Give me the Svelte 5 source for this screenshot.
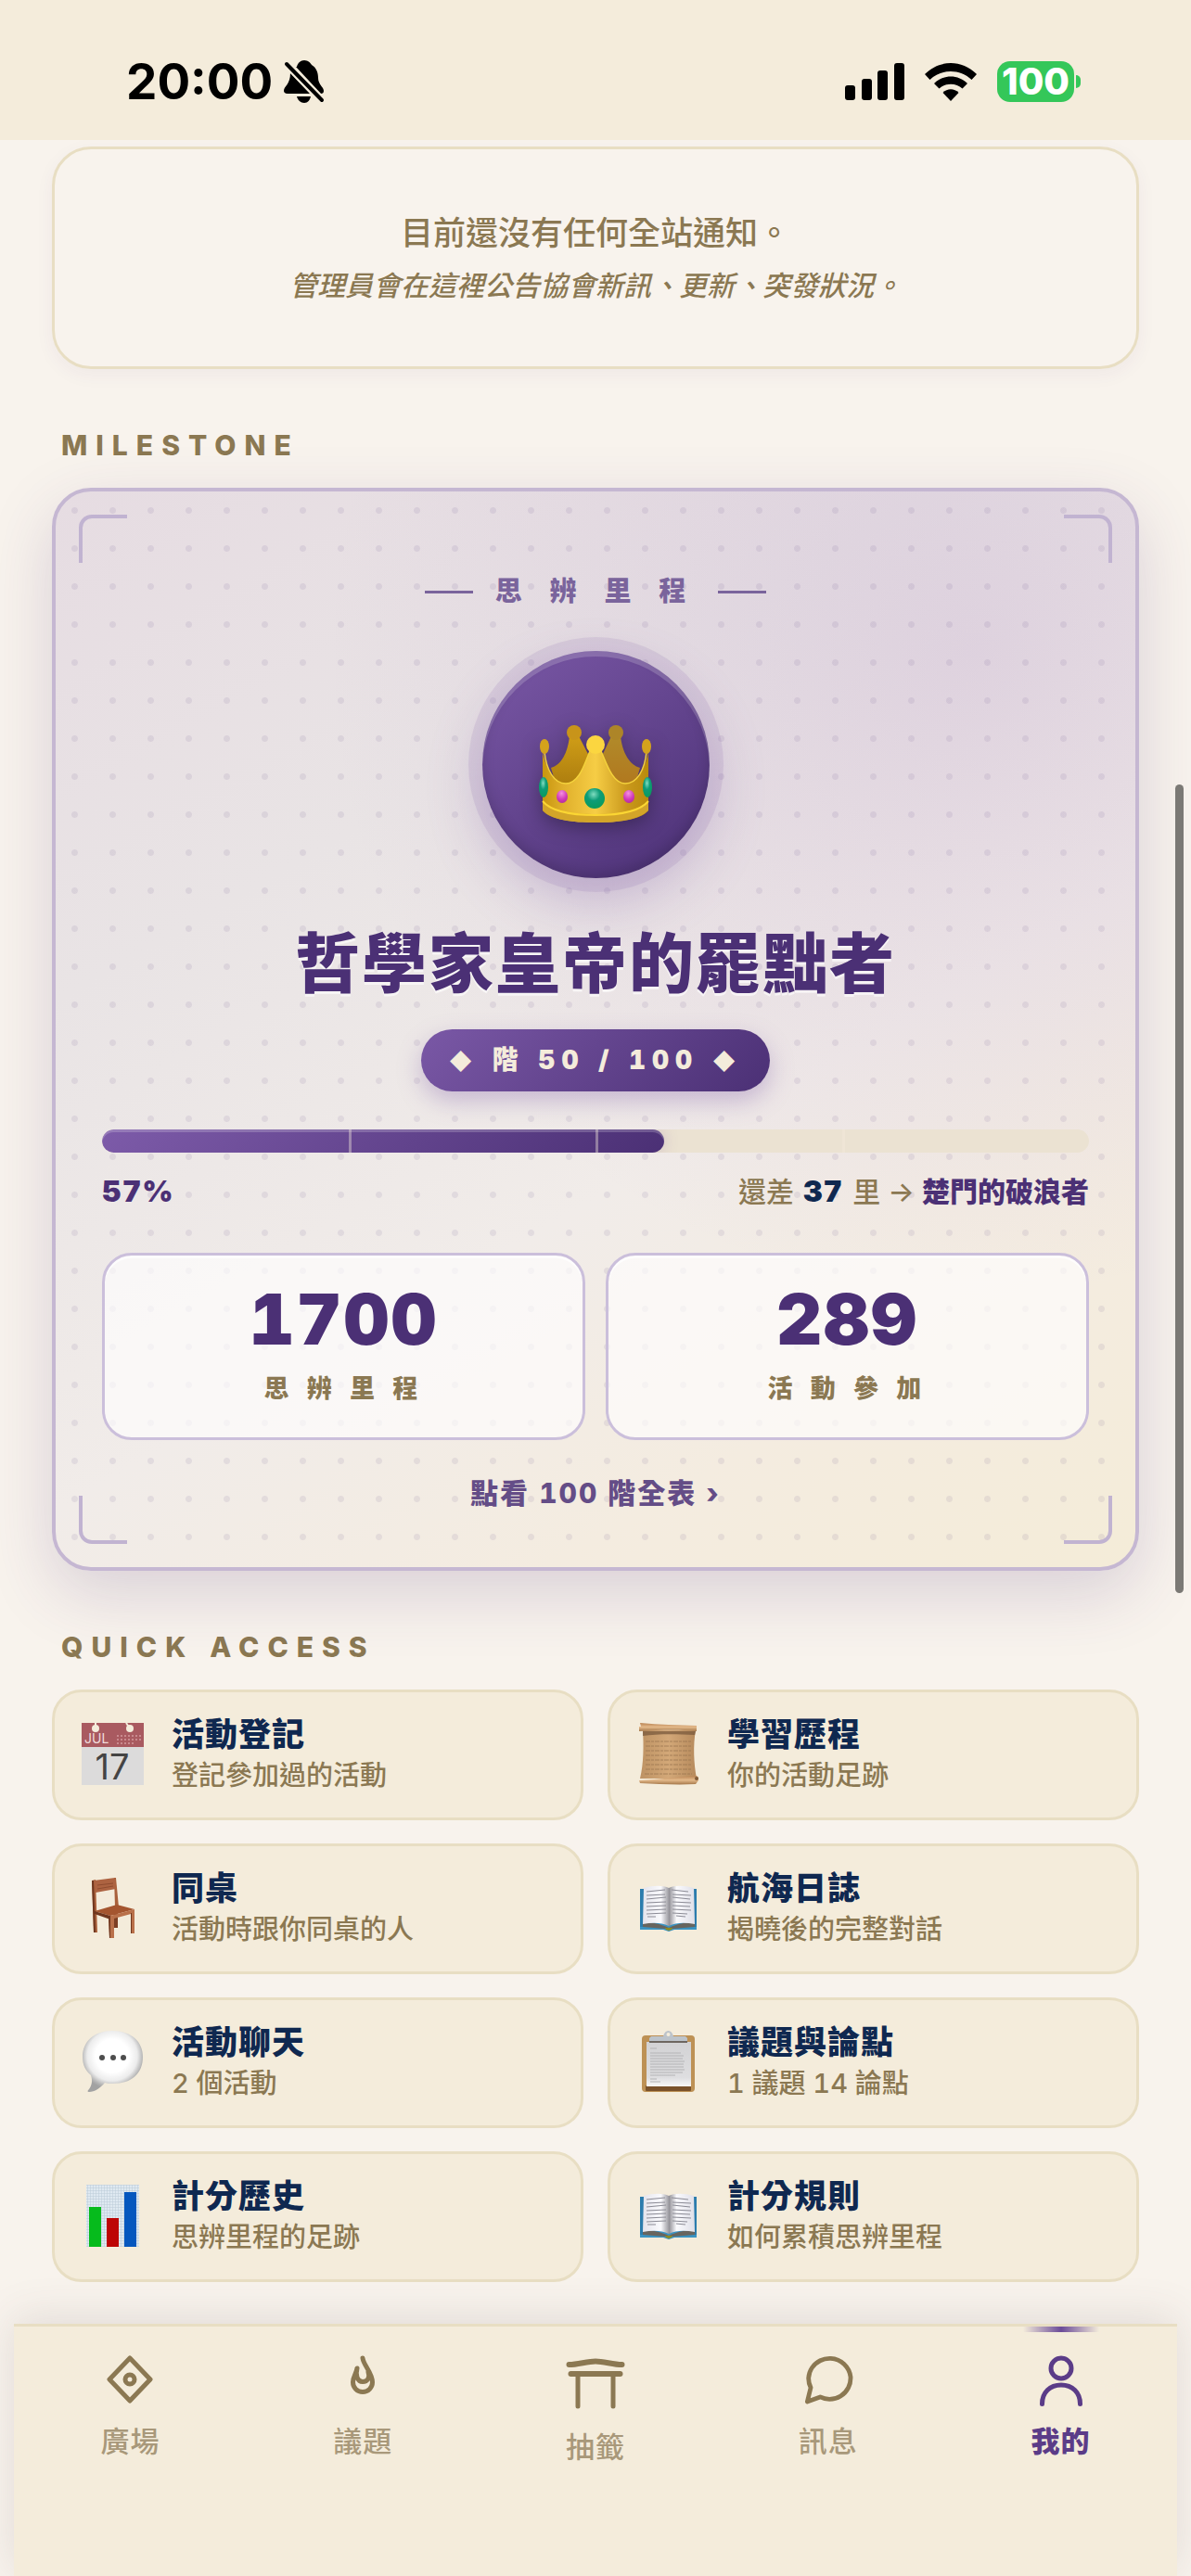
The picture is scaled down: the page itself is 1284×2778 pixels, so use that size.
<script lang="ts">
  type QuickLink = { icon: string; title: string; note: string };
  type Tab = { id: string; label: string };

  const currentMiles = 1700;
  const eventsJoined = 289;
  const milesLeft = 37;
  const progress = 57;

  const stats = [
    { value: currentMiles, label: '思 辨 里 程' },
    { value: eventsJoined, label: '活 動 參 加' }
  ];

  const quickLinks: QuickLink[] = [
    { icon: 'calendar', title: '活動登記', note: '登記參加過的活動' },
    { icon: 'scroll', title: '學習歷程', note: '你的活動足跡' },
    { icon: 'chair', title: '同桌', note: '活動時跟你同桌的人' },
    { icon: 'book', title: '航海日誌', note: '揭曉後的完整對話' },
    { icon: 'bubble', title: '活動聊天', note: '2 個活動' },
    { icon: 'clipboard', title: '議題與論點', note: '1 議題 14 論點' },
    { icon: 'chart', title: '計分歷史', note: '思辨里程的足跡' },
    { icon: 'book', title: '計分規則', note: '如何累積思辨里程' }
  ];

  const tabs: Tab[] = [
    { id: 'plaza', label: '廣場' },
    { id: 'topics', label: '議題' },
    { id: 'draw', label: '抽籤' },
    { id: 'messages', label: '訊息' },
    { id: 'me', label: '我的' }
  ];

  let activeTab = $state('me');
</script>

{#snippet crown()}
  <svg class="crown" viewBox="0 0 122 106" aria-hidden="true">
    <defs>
      <linearGradient id="crown-front" x1="0" y1="0" x2="1" y2="0">
        <stop offset="0" stop-color="#c8960f" />
        <stop offset="0.2" stop-color="#e0b02c" />
        <stop offset="0.5" stop-color="#f6cd45" />
        <stop offset="0.8" stop-color="#c9981c" />
        <stop offset="1" stop-color="#b98a0c" />
      </linearGradient>
      <linearGradient id="crown-back" x1="0" y1="0" x2="0" y2="1">
        <stop offset="0" stop-color="#cf9d17" />
        <stop offset="1" stop-color="#a97a0e" />
      </linearGradient>
      <linearGradient id="crown-back-right" x1="0" y1="0" x2="0" y2="1">
        <stop offset="0" stop-color="#b18a2a" />
        <stop offset="1" stop-color="#b1761d" />
      </linearGradient>
      <radialGradient id="gem-green" cx="0.45" cy="0.3" r="0.7">
        <stop offset="0" stop-color="#7fdcc0" />
        <stop offset="0.45" stop-color="#0d9c78" />
        <stop offset="1" stop-color="#0a9a5c" />
      </radialGradient>
      <radialGradient id="gem-pink" cx="0.45" cy="0.25" r="0.8">
        <stop offset="0" stop-color="#f58fe0" />
        <stop offset="0.6" stop-color="#d03ab9" />
        <stop offset="1" stop-color="#b02a9c" />
      </radialGradient>
    </defs>
    <path d="M33 12 C31 30 24 43 13 46 L20 70 H58 L54 33 L43 12Z" fill="url(#crown-back)" />
    <path d="M88 12 C90 30 98 43 109 46 L102 70 H64 L68 33 L78 12Z" fill="url(#crown-back-right)" />
    <circle cx="38" cy="8" r="8" fill="#c8941a" />
    <circle cx="83" cy="8" r="8" fill="#ad8528" />
    <path d="M4 29 C8 48 16 63 29 63 C44 63 50 39 55 28 H67 C72 39 79 63 93 63 C106 63 114 48 118 29 L118 92 C110 102 86 105 61 105 C36 105 12 102 4 92Z" fill="url(#crown-front)" />
    <path d="M6 29 C8 48 16 63 29 63 C44 63 50 39 55 28 M67 28 C72 39 79 63 93 63 C106 63 114 48 116 29" fill="none" stroke="#f4d23c" stroke-width="1.5" />
    <path d="M4 81 C14 93 38 96 61 96 S108 93 118 81 V92 C108 102 86 105 61 105 S14 102 4 92Z" fill="#d3a529" />
    <path d="M4 82 C14 94 38 97 61 97 S108 94 118 82" fill="none" stroke="#fbd633" stroke-width="2" />
    <ellipse cx="6" cy="23" rx="5" ry="8" fill="#d4a31c" />
    <ellipse cx="116" cy="23" rx="5" ry="8" fill="#d4a31c" />
    <circle cx="61" cy="21" r="10" fill="#fbd640" />
    <ellipse cx="5" cy="67" rx="5" ry="11" fill="url(#gem-green)" />
    <ellipse cx="117" cy="67" rx="5" ry="11" fill="url(#gem-green)" />
    <ellipse cx="25" cy="77" rx="6" ry="7" fill="url(#gem-pink)" />
    <ellipse cx="97" cy="77" rx="6" ry="7" fill="url(#gem-pink)" />
    <circle cx="60" cy="79" r="11" fill="url(#gem-green)" />
  </svg>
{/snippet}

{#snippet quickIcon(name: string)}
  <svg class="quick-icon" viewBox="0 0 67 67" aria-hidden="true">
    {#if name === 'calendar'}
      <rect width="67" height="67" fill="#dcdbdb" />
      <rect width="67" height="26" fill="#a95a60" />
      <circle cx="15" cy="6" r="4" fill="#f4ecdb" />
      <circle cx="52" cy="6" r="4" fill="#f4ecdb" />
      <path d="M15 0V6M48 0L52 6" stroke="#f4ecdb" stroke-width="2" />
      <text class="cal-month" x="3" y="22">JUL</text>
      <path d="M38 14H65M38 18H65M38 22H58" stroke="#c98a8e" stroke-width="2" stroke-dasharray="2 2" />
      <text class="cal-day" x="33" y="61" text-anchor="middle">17</text>
    {:else if name === 'scroll'}
      <defs>
        <linearGradient id="scroll-paper" x1="0" y1="0" x2="1" y2="0">
          <stop offset="0" stop-color="#bd9263" />
          <stop offset="0.5" stop-color="#d3a878" />
          <stop offset="1" stop-color="#b68a5c" />
        </linearGradient>
        <linearGradient id="scroll-roll" x1="0" y1="0" x2="0" y2="1">
          <stop offset="0" stop-color="#b98352" />
          <stop offset="0.5" stop-color="#e3b98a" />
          <stop offset="1" stop-color="#a5784b" />
        </linearGradient>
      </defs>
      <path d="M6 8 H63 C60 24 61 44 64 60 H3 C7 44 7 24 6 8Z" fill="url(#scroll-paper)" />
      <path d="M6 9 H63 L62 13 C40 12 20 12 6 14Z" fill="#7a5a3c" opacity="0.75" />
      <path d="M9 20H58M9 25H59M9 30H58M9 35H59M9 40H58M9 45H59M9 50H58M8 55H59" stroke="#94714c" stroke-width="1" stroke-dasharray="5 1 3 1" opacity="0.7" />
      <path d="M3 0 C24 2 44 2 64 3 V9 C44 7 22 8 2 9 L2 4 L4 4Z" fill="url(#scroll-roll)" />
      <path d="M2 62 C24 61 46 58 64 57 L66 59 V62 L63 66 C44 67 22 66 3 65Z" fill="url(#scroll-roll)" />
      <circle cx="64" cy="60" r="2" fill="#805c3a" />
    {:else if name === 'chair'}
      <path d="M35 38H39V55H35Z" fill="#7c3f24" />
      <path d="M11 4L15 3L17 60H13Z" fill="#a9603b" />
      <path d="M11 4L13 4L15 60H13Z" fill="#6f371f" />
      <path d="M35 1H37L40 33H36Z" fill="#a9603b" />
      <path d="M13 4L36 1L37 13L15 17Z" fill="#ad6341" />
      <path d="M17 9L34 7M17 13L34 10" stroke="#8f4c2f" stroke-width="1" />
      <path d="M14 37L38 30L57 35L31 42Z" fill="#a4552f" />
      <path d="M14 37L31 42V46L14 40Z" fill="#6f371f" />
      <path d="M31 42L57 35V39L31 46Z" fill="#b9704a" />
      <path d="M29 43H35V66H30Z" fill="#b9704a" />
      <path d="M29 43H31V66H30Z" fill="#6f371f" />
      <path d="M53 37H57V61H53Z" fill="#b9704a" />
      <path d="M53 39H54V61H53Z" fill="#6f371f" />
    {:else if name === 'book'}
      <defs>
        <linearGradient id="page-left" x1="0" y1="0" x2="1" y2="0">
          <stop offset="0" stop-color="#e4e4ec" />
          <stop offset="0.7" stop-color="#fafafd" />
          <stop offset="1" stop-color="#9d9ca2" />
        </linearGradient>
        <linearGradient id="page-right" x1="0" y1="0" x2="1" y2="0">
          <stop offset="0" stop-color="#8e8d93" />
          <stop offset="0.3" stop-color="#fafafd" />
          <stop offset="1" stop-color="#dfdfe8" />
        </linearGradient>
      </defs>
      <path d="M3 13H64V57H40L34 59L28 57H3Z" fill="#3a93c2" />
      <path d="M3 13H7V54H3ZM60 13H64V54H60Z" fill="#2b7cad" />
      <path d="M6 49C16 49 26 51 34 55C42 51 52 49 62 49V54L38 56H30L6 54Z" fill="#67655f" />
      <path d="M7 12C18 9 28 9 34 12V53C26 49 16 49 6 51Z" fill="url(#page-left)" />
      <path d="M34 12C40 9 50 9 61 12L62 51C52 49 42 49 34 53Z" fill="url(#page-right)" />
      <path d="M10 16L30 14M10 20L30 19M10 24L31 22M10 28L31 27M10 32L31 31M10 36L31 35M10 40L31 39M11 43L20 43M37 14L55 16M38 19L58 20M38 22L57 24M38 27L58 28M38 31L57 32M38 35L58 36M38 39L54 40M42 42L52 43" stroke="#8c8c96" stroke-width="1.2" />
      <path d="M30 55H38L37 57L34 58L31 57Z" fill="#8c8a22" />
    {:else if name === 'bubble'}
      <defs>
        <radialGradient id="bubble-fill" gradientUnits="userSpaceOnUse" cx="33" cy="27" r="36">
          <stop offset="0.5" stop-color="#ffffff" />
          <stop offset="0.75" stop-color="#ececec" />
          <stop offset="0.92" stop-color="#b4b4b4" />
          <stop offset="1" stop-color="#a2a2a2" />
        </radialGradient>
      </defs>
      <path d="M33 0C54 0 66 12 66 28C66 46 54 57 34 57C30 57 27 57 25 56C20 62 14 66 8 66C6 66 6 65 8 63C11 59 12 54 10 48C4 43 1 37 1 28C1 12 13 0 33 0Z" fill="url(#bubble-fill)" />
      <circle cx="22" cy="29" r="3" fill="#4d4d4d" />
      <circle cx="34" cy="29" r="3" fill="#4d4d4d" />
      <circle cx="45" cy="29" r="3" fill="#4d4d4d" />
    {:else if name === 'clipboard'}
      <defs>
        <linearGradient id="sheet" x1="0" y1="0" x2="0" y2="1">
          <stop offset="0" stop-color="#d2d2d4" />
          <stop offset="0.8" stop-color="#dedee0" />
          <stop offset="1" stop-color="#f8f8f8" />
        </linearGradient>
      </defs>
      <rect x="5" y="5" width="57" height="61" rx="4" fill="#bd9155" />
      <rect x="9" y="59" width="49" height="6" rx="1" fill="#7a522b" />
      <rect x="10" y="12" width="48" height="48" fill="url(#sheet)" />
      <path d="M14 19H21M14 24H47M14 27H50M14 30H49M14 33H51M14 36H50M14 39H50M14 42H51M14 45H49M14 48H41M14 52H21M14 55H25" stroke="#b4b4b6" stroke-width="1.2" />
      <path d="M28 6C29 2 31 0 33.5 0S38 2 39 6H52L54 8V13H13V8L15 6Z" fill="#bcc3ca" />
      <circle cx="33.5" cy="4" r="2" fill="#f4ecdb" />
      <path d="M13 12H54" stroke="#6d6660" stroke-width="2" />
    {:else if name === 'chart'}
      <defs>
        <pattern id="graph-paper" width="3" height="3" patternUnits="userSpaceOnUse">
          <rect width="3" height="3" fill="#dfe9f1" />
          <path d="M0 0H3M0 0V3" stroke="#bccbd8" stroke-width="1" />
        </pattern>
      </defs>
      <rect x="5" width="57" height="67" fill="url(#graph-paper)" />
      <rect x="8" y="24" width="13" height="43" fill="#06bb1c" />
      <rect x="27" y="36" width="13" height="31" fill="#bd0505" />
      <rect x="46" y="8" width="13" height="59" fill="#0557be" />
    {/if}
  </svg>
{/snippet}

{#snippet tabIcon(id: string)}
  {#if id === 'plaza'}
    <svg class="tab-icon" viewBox="0 0 64 64" aria-hidden="true">
      <path d="M32 9L54 32L32 55L10 32Z" />
      <circle cx="32" cy="32" r="5" />
    </svg>
  {:else if id === 'topics'}
    <svg class="tab-icon" viewBox="0 0 64 64" aria-hidden="true">
      <path d="M32 9C33 17 42.5 25 42.5 35A10.5 10.5 0 0 1 21.5 35C21.5 29 25 26 26 20C24 27 26 34.5 32 34.5C37.5 34.5 40 30 38 24" />
    </svg>
  {:else if id === 'draw'}
    <svg class="tab-icon wide" viewBox="0 0 70 70" aria-hidden="true">
      <path d="M6.5 16C16 16 26 12.5 35 12.5S54 16 63.5 16" stroke-width="6" />
      <path d="M8.5 26H61.5" stroke-width="6" />
      <path d="M16 26V61M54 26V61" />
    </svg>
  {:else if id === 'messages'}
    <svg class="tab-icon" viewBox="0 0 24 24" aria-hidden="true">
      <path stroke-width="1.8" d="M21 11.5a8.38 8.38 0 0 1-.9 3.8 8.5 8.5 0 0 1-7.6 4.7 8.38 8.38 0 0 1-3.8-.9L3.5 21l1.4-5.7a8.38 8.38 0 0 1-.9-3.8 8.5 8.5 0 0 1 4.7-7.1 8.38 8.38 0 0 1 3.8-.9h.5a8.48 8.48 0 0 1 8 7.5v.5z" />
    </svg>
  {:else}
    <svg class="tab-icon" viewBox="0 0 64 64" aria-hidden="true">
      <circle cx="32" cy="20" r="11" />
      <path d="M11.5 58.5C11.5 46 20 38 32 38S52.5 46 52.5 58.5" />
    </svg>
  {/if}
{/snippet}

<div class="screen">
  <header class="status-bar">
    <div class="status-left">
      <time>20:00</time>
      <svg class="bell" viewBox="0 0 44 46" aria-label="靜音">
        <path d="M14 7C15 3 18 0 22 0S29 3 30 5C35 8 37 13 37 19C37 26 43 29 43 33C43 35 42 36 40 36L13 7Z" />
        <path d="M7 14L28 36H4C1 36 0 34 0 33C0 28 7 26 7 14Z" />
        <path d="M14 39H29C28 43 26 46 22 46S15 43 14 39Z" />
        <path d="M3 4L41 43" fill="none" stroke="#f4ecdb" stroke-width="8" />
        <path d="M3 4L41 43" fill="none" stroke="#000" stroke-width="4" stroke-linecap="round" />
      </svg>
    </div>
    <div class="status-right">
      <svg class="signal" viewBox="0 0 64 40" aria-label="訊號">
        <rect y="24" width="11" height="16" rx="3" />
        <rect x="18" y="17" width="11" height="23" rx="3" />
        <rect x="35" y="8" width="11" height="32" rx="3" />
        <rect x="53" width="11" height="40" rx="3" />
      </svg>
      <svg class="wifi" viewBox="0 0 56 41" aria-label="Wi-Fi">
        <path d="M0 12C16 -4 40 -4 56 12L50.5 18C38 6 18 6 5.5 18Z" />
        <path d="M10 22C20 12 36 12 46 22L40.5 27.5C34 21 22 21 15.5 27.5Z" />
        <path d="M19.5 32C24 27 32 27 36.5 32L28 41Z" />
      </svg>
      <div class="battery">
        <span class="battery-level">100</span>
        <span class="battery-cap"></span>
      </div>
    </div>
  </header>

  <main>
    <section class="notice">
      <p>目前還沒有任何全站通知。</p>
      <p class="notice-hint">管理員會在這裡公告協會新訊、更新、突發狀況。</p>
    </section>

    <h2 class="section-title">MILESTONE</h2>
    <section class="milestone">
      <i class="corner top left"></i>
      <i class="corner top right"></i>
      <i class="corner bottom left"></i>
      <i class="corner bottom right"></i>

      <div class="eyebrow">思 辨 里 程</div>
      <div class="medal">{@render crown()}</div>
      <h1>哲學家皇帝的罷黜者</h1>
      <div class="rank"><small>◆</small> 階 50 / 100 <small>◆</small></div>

      <div class="track" role="progressbar" aria-label="思辨里程" aria-valuenow={progress} aria-valuemin="0" aria-valuemax="100">
        <div class="fill" style="width: {progress}%"></div>
        <div class="ticks"><i></i><i></i><i></i><i></i></div>
      </div>
      <div class="progress-row">
        <strong class="percent">{progress}%</strong>
        <span>還差 <b>{milesLeft}</b> 里 → <strong>楚門的破浪者</strong></span>
      </div>

      <div class="stats">
        {#each stats as stat}
          <div class="stat">
            <span class="stat-value">{stat.value}</span>
            <span class="stat-label">{stat.label}</span>
          </div>
        {/each}
      </div>
      <a class="all-ranks" href="#ranks">點看 100 階全表 ›</a>
    </section>

    <h2 class="section-title">QUICK ACCESS</h2>
    <section class="quick-grid">
      {#each quickLinks as link}
        <a class="quick-card" href="#quick">
          {@render quickIcon(link.icon)}
          <span class="quick-text">
            <span class="quick-title">{link.title}</span>
            <span class="quick-note">{link.note}</span>
          </span>
        </a>
      {/each}
    </section>
  </main>

  <nav>
    {#each tabs as tab}
      <a href="#{tab.id}" class="tab" class:active={tab.id === activeTab} onclick={() => (activeTab = tab.id)}>
        {@render tabIcon(tab.id)}
        <span>{tab.label}</span>
      </a>
    {/each}
  </nav>

  <div class="scroll-thumb"></div>
</div>

<style>
  :global(body) {
    background: #f8f3ed;
  }

  .screen {
    --cream: #f4ecdb;
    --line: #e8dec3;
    --brown: #8b7852;
    --navy: #0f2850;
    --purple: #4b3075;
    --lilac: #c5b7d2;
    position: relative;
    display: flex;
    flex-direction: column;
    min-height: 100vh;
    overflow: hidden;
    color: var(--brown);
    font-family: Inter, "Noto Sans CJK TC", sans-serif;
  }

  a {
    color: inherit;
    text-decoration: none;
  }

  h1,
  h2,
  p {
    margin: 0;
  }

  /* Status bar */
  .status-bar {
    position: relative;
    z-index: 1;
    display: flex;
    justify-content: space-between;
    padding: 66px 119px 41px 136px;
    background: var(--cream);
    color: #000;
  }

  .status-left,
  .status-right {
    display: flex;
    align-items: center;
    height: 44px;
  }

  .status-left {
    gap: 12px;
  }

  .status-right {
    gap: 22px;
  }

  time {
    font-size: 53px;
    font-weight: 700;
    line-height: 46px;
  }

  .bell {
    width: 44px;
    height: 46px;
  }

  .signal {
    width: 64px;
    height: 40px;
  }

  .wifi {
    width: 56px;
    height: 41px;
  }

  .battery {
    display: flex;
    align-items: center;
    gap: 2px;
  }

  .battery-level {
    width: 83px;
    border-radius: 14px;
    background: #34c759;
    color: #fff;
    font-size: 40px;
    font-weight: 800;
    line-height: 44px;
    text-align: center;
  }

  .battery-cap {
    width: 5px;
    height: 14px;
    border-radius: 0 5px 5px 0;
    background: #34c759;
  }

  main {
    flex: 1;
    padding: 7px 56px 45px;
    font-variant-numeric: tabular-nums;
  }

  /* Notice */
  .notice {
    padding: 62px 40px 58px;
    border: 3px solid var(--line);
    border-radius: 42px;
    box-shadow: 0 6px 20px rgba(75, 48, 117, 0.05);
    text-align: center;
    font-size: 35px;
    font-weight: 500;
    line-height: 57px;
  }

  .notice-hint {
    font-size: 30px;
    font-style: italic;
  }

  .section-title {
    padding: 62px 10px 26px;
    font-size: 30px;
    font-weight: 800;
    line-height: 40px;
    letter-spacing: 9px;
  }

  /* Milestone */
  .milestone {
    position: relative;
    display: flex;
    flex-direction: column;
    align-items: center;
    padding: 88px 50px 60px;
    border: 4px solid var(--lilac);
    border-radius: 42px;
    background:
      radial-gradient(circle, rgba(75, 48, 117, 0.09) 3px, transparent 4px) 0 0 / 41px 41px,
      radial-gradient(circle at 85% 15%, rgba(150, 100, 180, 0.16), transparent 50%),
      linear-gradient(150deg, #e6dce2 0%, #e9e4e5 30%, #f1ece9 60%, #f4ece0 80%, #f4ecd8 100%);
    box-shadow: 0 24px 70px rgba(75, 48, 117, 0.18);
  }

  .corner {
    position: absolute;
    box-sizing: border-box;
    width: 52px;
    height: 52px;
    border: 0 solid #c1b3d1;
  }

  .corner.top {
    top: 25px;
    border-top-width: 4px;
  }

  .corner.bottom {
    bottom: 25px;
    border-bottom-width: 4px;
  }

  .corner.left {
    left: 25px;
    border-left-width: 4px;
  }

  .corner.right {
    right: 25px;
    border-right-width: 4px;
  }

  .corner.top.left { border-top-left-radius: 14px; }
  .corner.top.right { border-top-right-radius: 14px; }
  .corner.bottom.left { border-bottom-left-radius: 14px; }
  .corner.bottom.right { border-bottom-right-radius: 14px; }

  .eyebrow {
    display: flex;
    align-items: center;
    gap: 24px;
    color: #7a649c;
    font-size: 29px;
    font-weight: 800;
    line-height: 40px;
    letter-spacing: 11px;
  }

  .eyebrow::before,
  .eyebrow::after {
    content: '';
    width: 52px;
    height: 3px;
    background: currentColor;
  }

  .medal {
    display: grid;
    place-items: center;
    box-sizing: border-box;
    width: 245px;
    height: 245px;
    margin-top: 44px;
    padding-top: 20px;
    border-radius: 50%;
    background: linear-gradient(145deg, #7a58a6, #4b3075);
    box-shadow:
      0 0 0 15px rgba(122, 88, 166, 0.13),
      0 24px 60px rgba(122, 88, 166, 0.32),
      inset 0 6px 0 rgba(255, 255, 255, 0.18),
      inset 0 -6px 14px rgba(0, 0, 0, 0.15);
  }

  .crown {
    width: 122px;
    height: 106px;
    filter: drop-shadow(0 6px 10px rgba(0, 0, 0, 0.3));
  }

  h1 {
    margin-top: 51px;
    color: var(--purple);
    font-size: 70px;
    font-weight: 900;
    line-height: 84px;
    letter-spacing: 2px;
    text-shadow: 0 3px 0 rgba(255, 255, 255, 0.6);
  }

  .rank {
    margin-top: 28px;
    padding: 0 30px;
    border-radius: 34px;
    background: linear-gradient(135deg, #7a58a6, #4b3075);
    box-shadow: 0 10px 26px rgba(122, 88, 166, 0.35);
    color: var(--cream);
    font-size: 28px;
    font-weight: 900;
    line-height: 67px;
    letter-spacing: 7px;
  }

  .rank small {
    font-size: 24px;
    line-height: 24px;
  }

  .track {
    position: relative;
    align-self: stretch;
    height: 25px;
    margin-top: 41px;
    overflow: hidden;
    border-radius: 13px;
    background: #ebe2d2;
  }

  .fill {
    height: 100%;
    border-radius: 13px;
    background: linear-gradient(135deg, #7d5ba9, #4b3075);
    box-shadow: inset 0 3px 0 rgba(255, 255, 255, 0.2), 0 0 16px rgba(122, 88, 166, 0.25);
  }

  .ticks {
    position: absolute;
    inset: 0;
    display: grid;
    grid-template-columns: repeat(4, 1fr);
  }

  .ticks i + i {
    border-left: 3px solid rgba(244, 236, 219, 0.4);
  }

  .progress-row {
    display: flex;
    align-self: stretch;
    justify-content: space-between;
    margin-top: 22px;
    font-size: 30px;
    font-weight: 500;
    line-height: 40px;
  }

  .progress-row strong {
    color: var(--purple);
    font-weight: 800;
  }

  .progress-row b {
    margin: 0 2px;
    color: var(--navy);
    font-size: 32px;
    font-weight: 900;
    letter-spacing: 1px;
  }

  .progress-row .percent {
    font-size: 32px;
    font-weight: 900;
    letter-spacing: 1px;
  }

  .stats {
    display: grid;
    grid-template-columns: 1fr 1fr;
    align-self: stretch;
    gap: 22px;
    margin-top: 46px;
  }

  .stat {
    display: flex;
    flex-direction: column;
    align-items: center;
    padding: 24px 20px 32px;
    border: 3px solid #cbbfdb;
    border-radius: 32px;
    background: rgba(255, 255, 255, 0.65);
    box-shadow: inset 0 3px 0 rgba(255, 255, 255, 0.7);
  }

  .stat-value {
    color: var(--purple);
    font-size: 76px;
    font-weight: 900;
    line-height: 88px;
    letter-spacing: 2px;
  }

  .stat-label {
    margin-top: 12px;
    font-size: 27px;
    font-weight: 800;
    line-height: 40px;
    letter-spacing: 6px;
  }

  .all-ranks {
    margin-top: 37px;
    color: #644d87;
    font-size: 30px;
    font-weight: 800;
    line-height: 40px;
    letter-spacing: 2px;
  }

  /* Quick access */
  .quick-grid {
    display: grid;
    grid-template-columns: 1fr 1fr;
    gap: 25px 26px;
  }

  .quick-card {
    display: flex;
    align-items: center;
    gap: 30px;
    box-sizing: border-box;
    min-height: 141px;
    padding: 20px 29px 22px;
    border: 3px solid var(--line);
    border-radius: 32px;
    background: var(--cream);
  }

  .quick-icon {
    flex: none;
    width: 67px;
    height: 67px;
    overflow: visible;
    font-variant-numeric: normal;
  }

  .cal-month {
    fill: #f0dcdc;
    font-size: 14px;
  }

  .cal-day {
    fill: #444;
    font-size: 38px;
  }

  .quick-text {
    display: flex;
    flex-direction: column;
  }

  .quick-title {
    color: var(--navy);
    font-size: 35px;
    font-weight: 900;
    line-height: 46px;
    letter-spacing: 1px;
  }

  .quick-note {
    font-size: 29px;
    font-weight: 500;
    line-height: 44px;
  }

  /* Tab bar */
  nav {
    display: flex;
    align-items: flex-start;
    margin: 0 15px;
    padding-bottom: 119px;
    border-top: 3px solid var(--line);
    background: var(--cream);
    box-shadow: 0 -6px 44px rgba(75, 60, 60, 0.13);
  }

  .tab {
    position: relative;
    display: flex;
    flex: 1;
    flex-direction: column;
    align-items: center;
    gap: 15px;
    padding-top: 25px;
    color: #a8987a;
    font-size: 31px;
    font-weight: 500;
    line-height: 40px;
    letter-spacing: 1px;
  }

  .tab-icon {
    width: 64px;
    height: 64px;
    fill: none;
    stroke: var(--brown);
    stroke-width: 5;
    stroke-linecap: round;
    stroke-linejoin: round;
  }

  .tab-icon.wide {
    width: 70px;
    height: 70px;
  }

  .tab.active {
    color: #5b3c88;
    font-weight: 800;
  }

  .tab.active .tab-icon {
    stroke: #5b3c88;
  }

  .tab.active::before {
    content: '';
    position: absolute;
    top: 0;
    width: 82px;
    height: 6px;
    background: linear-gradient(90deg, transparent, #6b4b98, transparent);
  }

  .scroll-thumb {
    position: absolute;
    top: 846px;
    right: 8px;
    width: 9px;
    height: 872px;
    border-radius: 5px;
    background: #7b7975;
  }
</style>
